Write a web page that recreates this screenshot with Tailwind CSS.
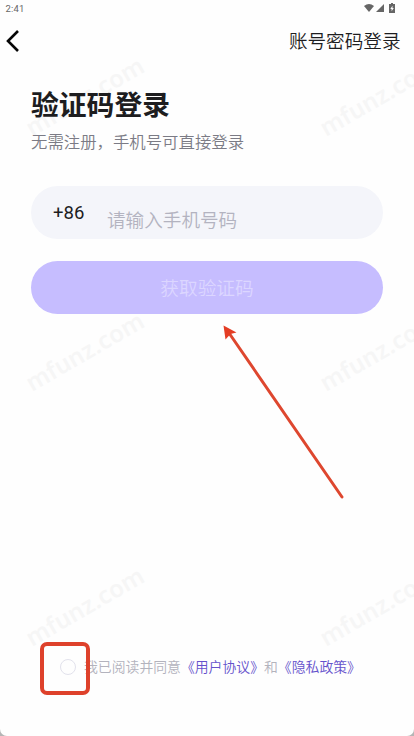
<!DOCTYPE html>
<html lang="zh-CN">
<head>
  <meta charset="UTF-8">
  <meta name="viewport" content="width=device-width, initial-scale=1.0">
  <title>验证码登录</title>
  <script src="https://cdn.jsdelivr.net/npm/@tailwindcss/browser@4"></script>
</head>
<body class="bg-[#b5b5b5] overflow-hidden font-['Noto_Sans_CJK_SC',sans-serif] font-[350]">
  <div class="relative w-[414px] h-[736px] bg-[#fefefe] rounded-b-[7px] overflow-hidden flex flex-col">

    <!-- Watermark -->
    <svg class="absolute inset-0 font-['Noto_Sans',sans-serif]" width="414" height="736" fill="#f6f6f6" font-size="24" font-weight="600">
      <text transform="translate(32 137) rotate(-30)" textLength="132">mfunz.com</text>
      <text transform="translate(326 137) rotate(-30)" textLength="132">mfunz.com</text>
      <text transform="translate(32 392) rotate(-30)" textLength="132">mfunz.com</text>
      <text transform="translate(326 392) rotate(-30)" textLength="132">mfunz.com</text>
      <text transform="translate(32 647) rotate(-30)" textLength="132">mfunz.com</text>
      <text transform="translate(326 647) rotate(-30)" textLength="132">mfunz.com</text>
    </svg>

    <!-- Status bar -->
    <div class="relative flex justify-between items-center h-4 pl-[5.5px] pr-[19px]">
      <span class="pt-[2px] font-[Roboto,sans-serif] font-normal text-[9.5px] leading-4 tracking-[0.2px] text-[#666]">2:41</span>
      <div class="flex items-center text-[#666]">
        <svg width="10" height="8" viewBox="0 0 10 8" fill="currentColor"><path d="M0 2Q5-2 10 2L5 8Z"/></svg>
        <svg class="ml-[2px]" width="8" height="8" viewBox="0 0 8 8" fill="currentColor"><path d="M8 0V8H0Z"/></svg>
        <svg class="ml-[5px]" width="6" height="10" viewBox="0 0 6 10">
          <path d="M2 0h2v1h2v9H0V1h2z" fill="currentColor"/>
          <path d="M3.5 2.8L1.3 6h1.3v2.3L4.8 5H3.5z" fill="#fefefe"/>
        </svg>
      </div>
    </div>

    <!-- Header -->
    <header class="relative flex justify-between items-center h-[50px] pl-[6px] pr-[13.5px]">
      <svg width="14" height="22" viewBox="0 0 14 22" fill="none" stroke="#050505" stroke-width="2.6"><path d="M12 1L2 11L12 21"/></svg>
      <a class="pb-[2px] text-[18.6px] leading-none text-[#1d1d1f]">账号密码登录</a>
    </header>

    <!-- Login form -->
    <main class="relative flex-1 flex flex-col px-[31px] pt-[17px]">
      <h1 class="text-[27.8px] leading-10 font-bold text-[#1d1d1f]">验证码登录</h1>
      <p class="mt-[6px] text-[16.4px] leading-6 text-[#7b7b85]">无需注册，手机号可直接登录</p>

      <div class="mt-[33px] flex items-center h-[53px] rounded-full bg-[#f4f5fa] pl-[22px]">
        <span class="w-[54px] pt-[3px] font-[Roboto,sans-serif] font-normal text-[18.5px] text-[#1d1d1f]">+86</span>
        <span class="pt-[13px] text-[18.6px] leading-none text-[#b3b3c0]">请输入手机号码</span>
      </div>

      <button class="mt-[22px] h-[53px] rounded-full bg-[#c6bdff] text-[18.7px] leading-none text-[#dcd6ff]">获取验证码</button>
    </main>

    <!-- Agreement -->
    <footer class="relative flex items-center h-6 mb-[57px] pl-[60px] text-[13.85px] text-[#b3b3bd] whitespace-nowrap">
      <span class="size-[16px] shrink-0 rounded-full border border-[#e2e2ec] mr-[8px]"></span>
      <p class="pb-[2px]">我已阅读并同意<a class="text-[#6552cc]">《用户协议》</a>和<a class="text-[#6552cc]">《隐私政策》</a></p>
    </footer>

    <!-- Hints -->
    <svg class="absolute inset-0" width="414" height="736">
      <rect x="42" y="644" width="46" height="49" rx="5" fill="none" stroke="#de412b" stroke-width="4"/>
      <path d="M342 497L229 333" stroke="#de472f" stroke-width="3" stroke-linecap="round"/>
      <path d="M223.5 325.5L236.5 332.5L230.5 334L225.5 339.5Z" fill="#e43d24"/>
    </svg>
  </div>
</body>
</html>
